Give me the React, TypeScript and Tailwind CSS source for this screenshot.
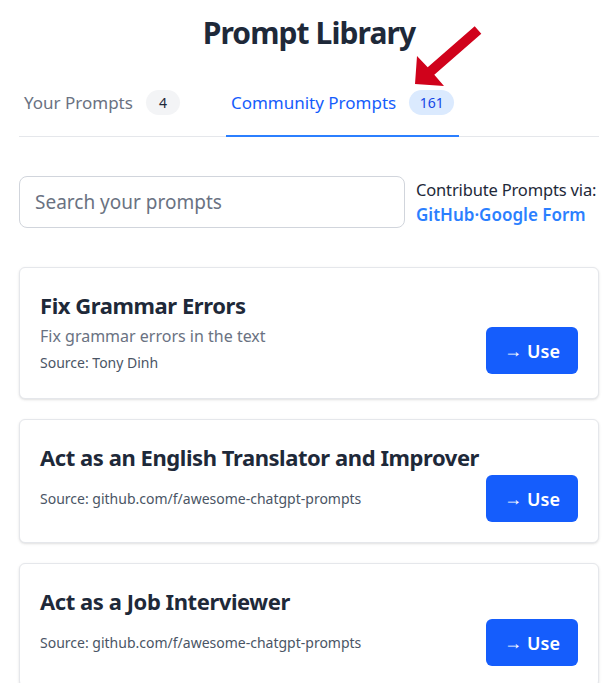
import React, { useState } from "react";

const prompts = [
  {
    title: "Fix Grammar Errors",
    description: "Fix grammar errors in the text",
    source: "Tony Dinh",
  },
  {
    title: "Act as an English Translator and Improver",
    description: "",
    source: "github.com/f/awesome-chatgpt-prompts",
  },
  {
    title: "Act as a Job Interviewer",
    description: "",
    source: "github.com/f/awesome-chatgpt-prompts",
  },
];

const Arrow = () => (
  <svg
    className="absolute left-0 top-0 pointer-events-none"
    width="615"
    height="120"
    viewBox="0 0 615 120"
  >
    <polygon
      points="415,84 417,56 427.7,67.2 474.7,26.2 481.3,33.8 434.3,74.8 444,86"
      fill="#d0021b"
    />
  </svg>
);

const App = () => {
  const [tab, setTab] = useState<"yours" | "community">("community");
  const [query, setQuery] = useState("");

  return (
    <div
      className="relative min-h-screen bg-white pl-[19px] pr-[16px] pt-[15px] text-gray-800"
      style={{ fontFamily: '"Noto Sans", "Open Sans", sans-serif' }}
    >
      <h1 className="text-center text-3xl font-bold leading-9 tracking-[-0.03em] text-gray-800">
        Prompt Library
      </h1>

      {/* tabs */}
      <div className="mt-[19px] flex gap-[41px] border-b border-gray-200">
        <button
          onClick={() => setTab("yours")}
          className={`-mb-px flex items-center gap-[13px] border-b-2 px-[5px] pt-5 pb-5 text-[17px] ${
            tab === "yours" ? "border-blue-500 text-blue-600" : "border-transparent text-gray-500"
          }`}
        >
          <span className="leading-6">Your Prompts</span>
          <span className="flex h-[25px] w-[34px] items-center justify-center rounded-full bg-gray-100 text-sm text-gray-800">
            4
          </span>
        </button>
        <button
          onClick={() => setTab("community")}
          className={`-mb-px flex items-center gap-[13px] border-b-2 px-[5px] pt-5 pb-5 text-[17px] ${
            tab === "community" ? "border-blue-500 text-blue-600" : "border-transparent text-gray-500"
          }`}
        >
          <span className="leading-6">Community Prompts</span>
          <span className="flex h-[25px] w-[45px] items-center justify-center rounded-full bg-blue-100 text-sm text-blue-700">
            161
          </span>
        </button>
      </div>

      {/* search + contribute */}
      <div className="mt-[39px] flex items-center gap-[11px]">
        <input
          value={query}
          onChange={(e) => setQuery(e.target.value)}
          placeholder="Search your prompts"
          className="h-[52px] w-[386px] shrink-0 rounded-lg border border-gray-300 px-[15px] text-[19px] text-gray-800 placeholder:text-gray-500 outline-none"
        />
        <div className="whitespace-nowrap leading-[25px]">
          <div className="text-[16.5px] tracking-[-0.01em] text-gray-800">Contribute Prompts via:</div>
          <div className="text-[17px] font-semibold text-blue-500">
            <a href="#">GitHub</a>·<a href="#">Google Form</a>
          </div>
        </div>
      </div>

      {/* prompt cards */}
      <div className="mt-[39px] flex flex-col gap-5">
        {prompts.map((p) => (
          <div key={p.title} className="rounded-md border border-gray-200 bg-white px-5 pt-5 pb-5 shadow-sm">
            <div className="text-[22px] font-bold leading-[35px] tracking-[-0.02em] text-gray-800">
              {p.title}
            </div>
            <div className="flex items-center justify-between">
              <div className={p.description ? "pb-[5px]" : ""}>
                {p.description && (
                  <div className="text-base leading-[26px] text-gray-500">{p.description}</div>
                )}
                <div className={`text-sm leading-5 text-gray-600 ${p.description ? "mt-1" : ""}`}>
                  Source: {p.source}
                </div>
              </div>
              <button className="flex h-[47px] w-[92px] items-center justify-center gap-[5px] rounded-md bg-blue-600 text-lg font-semibold text-white">
                <span className="text-lg font-normal" style={{ fontFamily: '"Liberation Sans", sans-serif' }}>
                  →
                </span>
                <span>Use</span>
              </button>
            </div>
          </div>
        ))}
      </div>

      <Arrow />
    </div>
  );
};

export default App;
